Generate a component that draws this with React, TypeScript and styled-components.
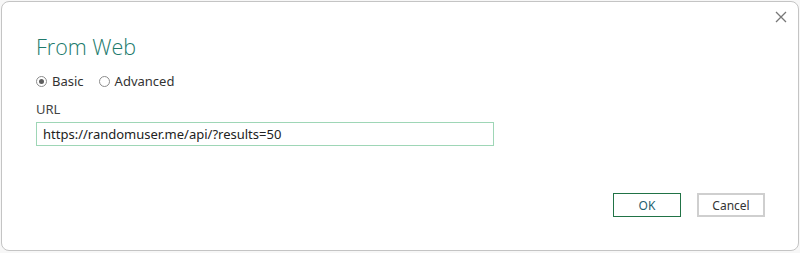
import React, { useState } from 'react'
import styled, { createGlobalStyle } from 'styled-components'

const GlobalStyle = createGlobalStyle`
  html, body {
    margin: 0;
    padding: 0;
    background: #f7f7f7;
  }
  body {
    font-family: 'Noto Sans', 'Open Sans', sans-serif;
    color: #333;
  }
`

const Page = styled.div`
  width: 800px;
  height: 253px;
  padding: 1px 1px 1px 1px;
  box-sizing: border-box;
`

const Dialog = styled.div`
  position: relative;
  box-sizing: border-box;
  height: 250px;
  background: #fff;
  border: 1px solid #c4c4c4;
  border-radius: 8px;
  padding: 31px 33px 0 34px;
  display: flex;
  flex-direction: column;
`

const CloseButton = styled.button`
  position: absolute;
  top: 7px;
  right: 9px;
  width: 16px;
  height: 16px;
  padding: 0;
  border: none;
  background: transparent;
  display: flex;
  align-items: center;
  justify-content: center;
  cursor: pointer;
`

const Title = styled.h2`
  margin: 0;
  font-family: 'Open Sans', sans-serif;
  font-weight: 300;
  font-size: 21.5px;
  line-height: 28px;
  color: #217a6c;
`

const RadioRow = styled.div`
  display: flex;
  align-items: center;
  gap: 15px;
  margin-top: 11px;
`

const RadioLabel = styled.label`
  display: flex;
  align-items: center;
  gap: 5px;
  font-size: 13px;
  color: #333;
  cursor: pointer;
`

const RadioCircle = styled.span<{ $checked: boolean }>`
  width: 11px;
  height: 11px;
  box-sizing: border-box;
  border-radius: 50%;
  border: 1px solid #8c8c8c;
  display: flex;
  align-items: center;
  justify-content: center;

  &::after {
    content: '';
    width: 5px;
    height: 5px;
    border-radius: 50%;
    background: ${(p) => (p.$checked ? '#5e5e5e' : 'transparent')};
  }
`

const FieldLabel = styled.div`
  margin-top: 10px;
  font-size: 13px;
  color: #444;
`

const UrlInput = styled.input`
  margin-top: 4px;
  width: 458px;
  height: 24px;
  box-sizing: border-box;
  border: 1px solid #9ed6b6;
  padding: 0 6px;
  font-family: 'Noto Sans', sans-serif;
  font-size: 13px;
  color: #222;
  caret-color: #000;
  outline: none;
`

const ButtonRow = styled.div`
  display: flex;
  justify-content: flex-end;
  gap: 16px;
  margin-top: 47px;
`

const DialogButton = styled.button<{ $primary?: boolean }>`
  width: 68px;
  height: 24px;
  box-sizing: border-box;
  background: #fff;
  border: ${(p) => (p.$primary ? '1px solid #217346' : '2px solid #cfcfcf')};
  font-family: 'Noto Sans', sans-serif;
  font-size: 12px;
  color: ${(p) => (p.$primary ? '#1f5f6f' : '#333')};
  cursor: pointer;
`

export default function App() {
  const [mode, setMode] = useState<'basic' | 'advanced'>('basic')
  const [url, setUrl] = useState('https://randomuser.me/api/?results=50')

  return (
    <Page>
      <GlobalStyle />
      <Dialog>
        <CloseButton aria-label="close">
          <svg width="12" height="12" viewBox="0 0 12 12">
            <path d="M1 1 L11 11 M11 1 L1 11" stroke="#777" strokeWidth="1.3" />
          </svg>
        </CloseButton>
        <Title>From Web</Title>
        <RadioRow>
          <RadioLabel onClick={() => setMode('basic')}>
            <RadioCircle $checked={mode === 'basic'} />
            Basic
          </RadioLabel>
          <RadioLabel onClick={() => setMode('advanced')}>
            <RadioCircle $checked={mode === 'advanced'} />
            Advanced
          </RadioLabel>
        </RadioRow>
        <FieldLabel>URL</FieldLabel>
        <UrlInput autoFocus value={url} onChange={(e) => setUrl(e.target.value)} />
        <ButtonRow>
          <DialogButton $primary>OK</DialogButton>
          <DialogButton>Cancel</DialogButton>
        </ButtonRow>
      </Dialog>
    </Page>
  )
}
